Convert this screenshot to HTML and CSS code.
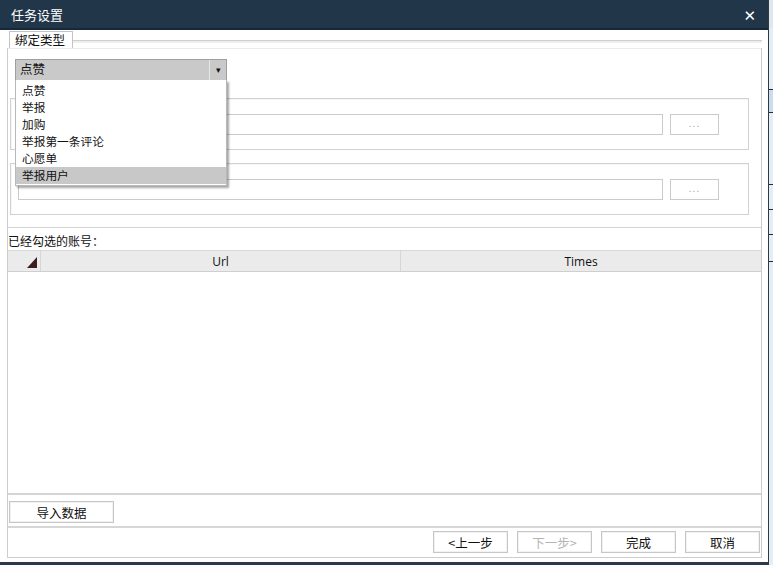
FILE: index.html
```html
<!DOCTYPE html>
<html lang="zh-CN">
<head>
    <meta charset="UTF-8">
    <title>任务设置</title>
    <link rel="stylesheet" href="styles.css">
</head>
<body>
    <div class="screen">
        <div class="dialog">
            <div class="titlebar">
                <span class="title">任务设置</span>
                <span class="close">✕</span>
            </div>
            <div class="content">
                <div class="tabstrip">
                    <div class="tab">绑定类型</div>
                    <div class="tabline"></div>
                </div>
                <div class="shell">
                    <div class="tabpage">
                        <div class="combo">
                            <span class="combo-text">点赞</span>
                            <span class="combo-btn">▾</span>
                        </div>
                        <div class="group">
                            <div class="textbox"></div>
                            <div class="browse">...</div>
                        </div>
                        <div class="group second">
                            <div class="textbox"></div>
                            <div class="browse">...</div>
                        </div>

                        <!-- open dropdown of the combo -->
                        <ul class="droplist">
                            <li>点赞</li>
                            <li>举报</li>
                            <li>加购</li>
                            <li>举报第一条评论</li>
                            <li>心愿单</li>
                            <li class="selected">举报用户</li>
                        </ul>
                    </div>

                    <div class="label">已经勾选的账号：</div>

                    <div class="grid">
                        <div class="grid-head">
                            <div class="corner">
                                <svg width="10" height="11" viewBox="0 0 10 11"><polygon points="10,0 10,11 0,11" fill="#3b1f1c"/></svg>
                            </div>
                            <div class="col url">Url</div>
                            <div class="col times">Times</div>
                        </div>
                        <div class="grid-body"></div>
                    </div>

                    <div class="import-bar">
                        <button class="btn import">导入数据</button>
                    </div>

                    <div class="nav-bar">
                        <button class="btn">&lt;上一步</button>
                        <button class="btn" disabled>下一步&gt;</button>
                        <button class="btn">完成</button>
                        <button class="btn">取消</button>
                    </div>
                </div>
            </div>
        </div>
        <div class="behind">
            <div class="behind-top"></div>
            <div class="row-line" style="height: 62px"></div>
            <div class="row-line blue" style="height: 23px"></div>
            <div class="row-line" style="height: 72px"></div>
            <div class="row-line" style="height: 25px"></div>
            <div class="row-line" style="height: 25px"></div>
            <div class="row-line" style="height: 27px"></div>
        </div>
    </div>
</body>
</html>
```

FILE: styles.css
```css
* { box-sizing: border-box; }
body { margin: 0; background: #e8eef4; font-family: "Noto Sans CJK SC", "Noto Sans", sans-serif; font-size: 12.5px; color: #111; overflow: hidden; }
.screen { display: flex; width: 773px; height: 565px; }

.dialog { width: 769px; height: 565px; display: flex; flex-direction: column; background: #fff; border-right: 1px solid #2b3a48; border-bottom: 3px solid #2b3a48; }
.titlebar { height: 30px; background: #213649; border-bottom: 2px solid #16293b; display: flex; align-items: center; justify-content: space-between; padding: 0 12px 0 11px; color: #fff; }
.title { font-size: 13px; }
.close { font-size: 15px; font-weight: bold; padding-top: 3px; font-family: "DejaVu Sans", sans-serif; }

.content { flex: 1; padding: 1px 6px 0 7px; display: flex; flex-direction: column; }

.tabstrip { display: flex; align-items: flex-start; height: 17px; }
.tab { height: 17px; padding: 0 7px 0 5px; border: 1px solid #c4c4c4; border-bottom: none; line-height: 15px; background: #fff; margin-left: 2px; }
.tabline { flex: 1; height: 10px; border-bottom: 1px solid #cfcfcf; box-shadow: 0 2px 0 #eee; }

.shell { width: 755px; height: 510px; border: 1px solid #cdcdcd; border-top: none; display: flex; flex-direction: column; }

.tabpage { position: relative; height: 180px; padding: 10px 0 0 7px; border-bottom: 1px solid #d4d4d4; border-top: 1px solid #ececec; }
.combo { width: 212px; height: 22px; display: flex; border: 1px solid #9f9f9f; background: #c9c9c9; }
.combo-text { flex: 1; padding-left: 4px; line-height: 18px; }
.combo-btn { width: 17px; border-left: 1px solid #e6e6e6; text-align: center; font-size: 9px; line-height: 20px; }

.group { width: 739px; height: 52px; margin: 17px 0 0 -5px; border: 1px solid #d2d2d2; box-shadow: inset 1px 1px 0 #f6f6f6; display: flex; align-items: flex-start; padding: 15px 0 0 7px; }
.group.second { margin-top: 13px; }
.textbox { width: 645px; height: 21px; border: 1px solid #cbcbcb; background: #fff; }
.browse { width: 49px; height: 21px; margin-left: 7px; border: 1px solid #cbcbcb; color: #aaa; font-size: 10px; text-align: center; line-height: 16px; letter-spacing: 1px; }

.droplist { position: absolute; left: 7px; top: 31px; width: 212px; margin: 0; padding: 2px 0 1px 0; list-style: none; background: #fff; border: 1px solid #b8b8b8; border-top: none; box-shadow: 2px 2px 2px rgba(0,0,0,0.35); font-size: 11.7px; }
.droplist li { height: 17px; line-height: 16px; padding-left: 6px; overflow: hidden; }
.droplist li.selected { background: #c8c8c8; }

.label { height: 22px; line-height: 25px; font-size: 12px; padding-left: 0; }

.grid { height: 245px; display: flex; flex-direction: column; border-bottom: 2px solid #d4d4d4; }
.grid-head { height: 22px; display: flex; background: #ebebeb; border-top: 1px solid #d8d8d8; border-bottom: 1px solid #cfcfcf; font-family: "Open Sans", sans-serif; font-size: 12px; }
.corner { width: 33px; border-right: 1px solid #d6d6d6; display: flex; align-items: flex-end; justify-content: flex-end; padding: 0 3px 3px 0; }
.col { text-align: center; line-height: 22px; }
.col.url { width: 360px; border-right: 1px solid #d6d6d6; }
.col.times { flex: 1; }
.grid-body { flex: 1; background: #fff; }

.btn { height: 22px; padding: 0; border: 1px solid #c6c6c6; background: #fff; box-shadow: inset 0 0 0 1px #f2f2f2; font-family: inherit; font-size: 12.5px; color: #111; }
.btn:disabled { color: #b4b4b4; }

.import-bar { height: 33px; padding: 6px 0 0 1px; border-bottom: 2px solid #d6d6d6; }
.btn.import { width: 105px; }

.nav-bar { flex: 1; display: flex; justify-content: flex-end; gap: 9px; padding: 3px 1px 0 0; }
.nav-bar .btn { width: 75px; }

.behind { width: 4px; background: #e4ecf4; display: flex; flex-direction: column; }
.behind-top { height: 28px; background: #dfe6ee; }
.row-line { border-bottom: 1px solid #2a2a2a; }
.row-line.blue { background: #cddcec; }
```
